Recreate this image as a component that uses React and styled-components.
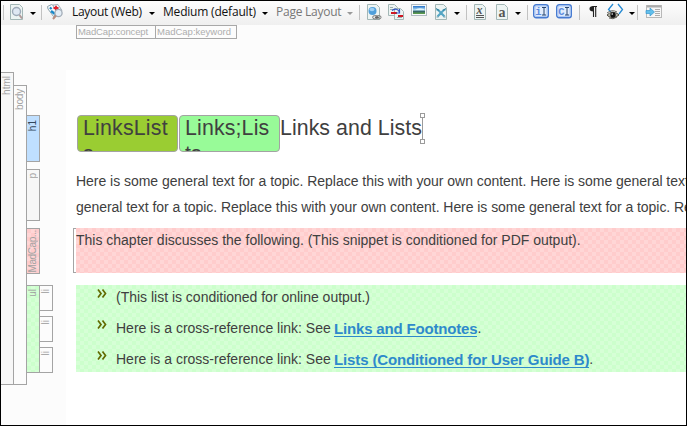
import React from "react";
import styled, { createGlobalStyle } from "styled-components";

const Global = createGlobalStyle`
  * { box-sizing: border-box; }
  body { margin: 0; overflow: hidden; }
`;

const checker = (a, b) =>
  `repeating-conic-gradient(${a} 0 25%, ${b} 0 50%) 0 0 / 8px 8px`;
const PINK = checker("#ffd6d6", "#ffcccc");
const GREEN = checker("#d6ffd6", "#ccffcc");

const Window = styled.div`
  width: 687px;
  height: 426px;
  border: 1px solid #000;
  background: #fcfcfc;
  display: flex;
  flex-direction: column;
  overflow: hidden;
  font-family: "Liberation Sans", Arial, sans-serif;
  color: #404040;
`;

const Toolbar = styled.div`
  height: 24px;
  flex: none;
  display: flex;
  align-items: flex-start;
  background: linear-gradient(#fdfdfd, #efefef);
`;

const Slot = styled.div`
  flex: none;
  width: ${(p) => p.$w}px;
  height: 24px;
  padding-top: 3px;
  svg { display: block; overflow: visible; }
`;

const Separator = styled.div`
  flex: none;
  width: 1px;
  height: 15px;
  margin: 4px ${(p) => p.$after}px 0 0;
  background: #c2c2c2;
`;

const MenuText = styled.div`
  flex: none;
  width: ${(p) => p.$w}px;
  font: 12px/22px "Open Sans", "Noto Sans", sans-serif;
  letter-spacing: ${(p) => p.$ls || 0}px;
  white-space: nowrap;
  color: ${(p) => (p.$dim ? "#777" : "#111")};
`;

const Caret = styled.div`
  flex: none;
  width: 0;
  height: 0;
  margin: 11px ${(p) => p.$after}px 0 0;
  border: 3px solid transparent;
  border-top-color: ${(p) => (p.$dim ? "#999" : "#000")};
  border-bottom: 0;
`;

const Workspace = styled.div`
  flex: 1;
  display: flex;
  min-height: 0;
`;

const Gutter = styled.div`
  flex: none;
  width: 65px;
  display: flex;
  align-items: flex-start;
`;

const Bar = styled.div`
  flex: none;
  width: ${(p) => p.$w || 14}px;
  height: ${(p) => p.$h}px;
  margin-top: ${(p) => p.$top || 0}px;
  margin-left: ${(p) => p.$left || 0}px;
  padding-top: ${(p) => p.$pad || 0}px;
  border: 1px solid #a4a4a4;
  border-left-width: ${(p) => (p.$open ? 0 : 1)}px;
  background: ${(p) => p.$bg || "#fcfcfc"};
  display: flex;
  justify-content: center;
  align-items: flex-start;
  overflow: hidden;
`;

const BarLabel = styled.span`
  writing-mode: vertical-rl;
  transform: rotate(180deg);
  font-size: ${(p) => p.$size || 10}px;
  line-height: 12px;
  letter-spacing: ${(p) => p.$ls || 0}px;
  white-space: nowrap;
  color: ${(p) => p.$color || "#a2a2a2"};
`;

const Stack = styled.div`
  display: flex;
  flex-direction: column;
  padding-top: ${(p) => p.$top || 0}px;
  margin-left: -1px;
`;

const ListBars = styled.div`
  display: flex;
  margin-top: 11px;
`;

const Main = styled.div`
  flex: 1;
  min-width: 0;
  display: flex;
  flex-direction: column;
`;

const MetaRow = styled.div`
  height: 45px;
  flex: none;
  display: flex;
  padding-left: 10px;
`;

const MetaTag = styled.div`
  width: ${(p) => p.$w}px;
  height: 14px;
  border: 1px solid #a8a8a8;
  margin-right: -1px;
  padding-left: 1px;
  font-size: 9.5px;
  line-height: 12px;
  letter-spacing: ${(p) => p.$ls}px;
  white-space: nowrap;
  color: #adadad;
`;

const Page = styled.div`
  flex: 1;
  background: #fff;
  padding: 45px 0 0 10px;
  overflow: hidden;
`;

const Heading = styled.h1`
  margin: 0;
  height: 37px;
  display: flex;
  padding-left: 1px;
  font-size: 21.33px;
  font-weight: 400;
  line-height: 26px;
`;

const Marker = styled.span`
  width: 101px;
  height: 37px;
  margin-right: 1px;
  padding-left: 5px;
  border: 1px solid #a3a3a3;
  border-radius: 4px;
  background: ${(p) => p.$bg};
  overflow: hidden;
  letter-spacing: ${(p) => p.$ls || 0}px;
`;

const MarkerText = styled.span`
  display: block;
  margin-top: -1px;
`;

const Title = styled.span`
  letter-spacing: 0.06px;
  white-space: nowrap;
  width: 139px;
  margin-left: -1px;
`;

const InsertPoint = styled.svg`
  display: block;
  margin-top: -3px;
`;

const Paragraph = styled.p`
  margin: 16px 0 0;
  height: 52px;
  font-size: 14px;
  line-height: 26px;
  white-space: nowrap;
`;

const Line = styled.span`
  display: block;
  letter-spacing: ${(p) => p.$ls || 0}px;
`;

const Snippet = styled.div`
  height: 45px;
  margin: 8px 0 0 -3px;
  border-left: 1px solid #a4a4a4;
  display: flex;
`;

const BracketEnds = styled.div`
  width: 2px;
  border: solid #a4a4a4;
  border-width: 1px 0;
`;

const SnippetText = styled.div`
  flex: 1;
  background: ${PINK};
  font-size: 14px;
  line-height: 25px;
  letter-spacing: ${(p) => p.$ls || 0}px;
  white-space: nowrap;
`;

const List = styled.ul`
  margin: 12px 0 0;
  padding: 0;
  height: 87px;
  background: ${GREEN};
  list-style: none;
  overflow: hidden;
`;

const Item = styled.li`
  display: flex;
  height: 31px;
  padding-left: 21px;
  font-size: 14px;
  line-height: 25px;
  white-space: nowrap;
`;

const Bullet = styled.svg`
  flex: none;
  width: 10px;
  height: 9px;
  margin: 4px 9px 0 0;
`;

const ItemText = styled.span`
  width: ${(p) => (p.$w ? p.$w + "px" : "auto")};
  letter-spacing: ${(p) => p.$ls || 0}px;
`;

const Link = styled.a`
  height: 21px;
  font-size: 15px;
  font-weight: 700;
  line-height: 26px;
  color: #2e8acb;
  border-bottom: 1px solid #2e8acb;
  letter-spacing: ${(p) => p.$ls || 0}px;
`;

const Sheet = ({ w = 12 }) => (
  <path d={`M.5 .5h${w - 4}l3 3v12H.5z`} fill="#edf4f3" stroke="#a3b7b6" />
);
const Icon = ({ w = 16, children }) => (
  <svg width={w} height="16" viewBox={`0 0 ${w} 16`} fill="none">{children}</svg>
);

const PreviewIcon = () => (
  <Icon>
    <Sheet w={13} />
    <circle cx="6.5" cy="7.5" r="4" fill="#dfe8f3" stroke="#9daab8" strokeWidth="1.4" />
    <path d="M9.5 11l2.5 3.5" stroke="#b19a9a" strokeWidth="2" />
  </Icon>
);
const TagsIcon = () => (
  <Icon>
    <path d="M.5 2.5l4-2 2 1 4 7-4 4L1 5z" fill="#f5f8fa" stroke="#8fa4ae" />
    <path d="M6 1l5-.5 4 6-5 3z" fill="#eef3f6" stroke="#a2b0ba" />
    <path d="M3 5l1.5-1.5M4 7l4 3" stroke="#1687c9" strokeWidth="2.4" />
    <path d="M6.5 4h5M9 1.8v4.6" stroke="#e21f2b" strokeWidth="1.8" />
    <circle cx="11.5" cy="9" r="3.6" fill="#e3edf6" stroke="#a3adb8" strokeWidth="1.3" />
    <path d="M9 11.5l-3 3.5" stroke="#b78d80" strokeWidth="2" />
  </Icon>
);
const LinkIcon = () => (
  <Icon>
    <Sheet w={13} />
    <circle cx="5.5" cy="7" r="4" fill="#4f9fdb" />
    <ellipse cx="5" cy="5.5" rx="2.5" ry="1.8" fill="#9fd0f3" />
    <rect x="5.7" y="11.7" width="5" height="3.2" rx="1.6" fill="#e6e6e6" stroke="#777" />
    <rect x="9" y="11.7" width="5" height="3.2" rx="1.6" stroke="#777" />
    <path d="M8 13.3h4" stroke="#555" />
  </Icon>
);
const XrefIcon = () => (
  <Icon>
    <path d="M.5 .5h6l3 3v8h-9z" fill="#edf4f3" stroke="#a3b7b6" />
    <path d="M6.5 4.5h6l3 3v8h-9z" fill="#edf4f3" stroke="#a3b7b6" />
    <path d="M2 3.5h3M2 5.5h4M9 13.5h5" stroke="#9bafaf" />
    <path d="M3 9h6M10 12h5" stroke="#cf1722" strokeWidth="2" />
    <path d="M4 6.5q5-3 7 1M11.5 5v4H8" stroke="#3155c5" strokeWidth="1.2" />
  </Icon>
);
const ImageIcon = () => (
  <Icon>
    <defs>
      <linearGradient id="sky" x2="0" y2="1">
        <stop stopColor="#2672ca" /><stop offset=".5" stopColor="#bce4f6" />
        <stop offset=".65" stopColor="#33606b" /><stop offset="1" stopColor="#62a747" />
      </linearGradient>
    </defs>
    <rect x=".5" y=".5" width="15" height="11" fill="#f7f9fa" stroke="#b0bac1" />
    <rect x="2" y="2" width="12" height="8" fill="url(#sky)" />
    <path d="M4 6q3-3 9-1v1H4z" fill="#e2f5fb" />
  </Icon>
);
const CutSheetIcon = () => (
  <Icon>
    <Sheet />
    <path d="M1.5 5.5q2 0 4 3l4 4M10.5 5.5q-2 0-4 3l-4 4" stroke="#55a6c4" strokeWidth="2.2" />
    <path d="M1 4.5l3 2M11 4.5l-3 2" stroke="#357f9a" />
    <path d="M1.5 13h2M8.5 13h2" stroke="#739ba9" />
  </Icon>
);
const GlyphText = styled.text`
  font-family: "Liberation Serif", serif;
  font-weight: 700;
  font-style: ${(p) => (p.$italic ? "italic" : "normal")};
  font-size: ${(p) => p.$size}px;
  fill: ${(p) => p.$fill || "#555"};
`;
const CodeLetter = styled.text`
  font: 700 10.5px "Liberation Mono", monospace;
  fill: #5c8bdc;
`;
const VariableIcon = () => (
  <Icon>
    <Sheet />
    <GlyphText $italic $size={12} x="2.5" y="9.5">x</GlyphText>
    <path d="M2 11.5h8M2 13.5h8" stroke="#555" />
  </Icon>
);
const StyleIcon = () => (
  <Icon>
    <Sheet />
    <GlyphText $size={14} x="2.5" y="13">a</GlyphText>
  </Icon>
);
const CursorIcon = ({ letter }) => (
  <Icon>
    <rect x=".7" y=".7" width="14.6" height="13" rx="2.5" fill="#e3edfc" stroke="#477bd1" strokeWidth="1.4" />
    <rect x="2" y="2" width="12" height="10.4" rx="1" stroke="#a8c6f2" />
    <CodeLetter x="2.2" y="10.8">{letter}</CodeLetter>
    <path d="M9 3.5h4M11 3.5v7.5M9 11h4" stroke="#26456f" />
  </Icon>
);
const PilcrowIcon = () => (
  <Icon w={9}>
    <path d="M8 2.5H3.5M4.5 2v11M6.7 2v11" stroke="#222" strokeWidth="1.1" />
    <path d="M4.5 2Q.5 2 .5 4.8T4.5 7.5z" fill="#222" />
  </Icon>
);
const EyeIcon = () => (
  <Icon>
    <path d="M6 0L1.5 5.5L4 8M11 0l4.5 5.5L12 10" stroke="#258ad3" strokeWidth="1.3" />
    <path d="M0 11q5-5 11-1l1 1q-6 5-11 1z" fill="#b4b4a7" stroke="#514f45" />
    <circle cx="6" cy="11" r="2.7" fill="#111" />
    <circle cx="5.2" cy="10" r=".8" fill="#fff" />
    <path d="M0 9q5-4 10-1M2 14q4 2 8-1" stroke="#65645c" />
  </Icon>
);
const PanelIcon = () => (
  <Icon>
    <rect x=".5" y="1.5" width="15" height="12" fill="#f6f6f6" stroke="#b8b8b8" />
    <path d="M1 2.5h14" stroke="#aaa" strokeWidth="2" />
    <path d="M9 5.5h5M9 7.5h5M9 9.5h5M9 11.5h5" stroke="#999" strokeWidth=".8" />
    <path d="M0 6.5h4V4l4.5 4L4 12V9.5H0z" fill="#62bfeb" stroke="#3697ce" strokeWidth=".7" />
  </Icon>
);

const Chevrons = () => (
  <Bullet viewBox="0 0 10 9" fill="none">
    <path d="M1 .5L4 4.5L1 8.5M5.5 .5L8.5 4.5L5.5 8.5" stroke="#626a00" strokeWidth="1.7" />
  </Bullet>
);

const TopToolbar = () => (
  <Toolbar>
    <Slot $w={2} />
    <Separator $after={6} />
    <Slot $w={20}><PreviewIcon /></Slot>
    <Caret $after={5} />
    <Separator $after={5} />
    <Slot $w={25}><TagsIcon /></Slot>
    <MenuText $w={77} $ls={-0.28}>Layout (Web)</MenuText>
    <Caret $after={8} />
    <MenuText $w={99} $ls={-0.2}>Medium (default)</MenuText>
    <Caret $after={8} />
    <MenuText $w={71} $ls={-0.25} $dim>Page Layout</MenuText>
    <Caret $dim $after={6} />
    <Separator $after={7} />
    <Slot $w={21}><LinkIcon /></Slot>
    <Slot $w={23}><XrefIcon /></Slot>
    <Slot $w={24}><ImageIcon /></Slot>
    <Slot $w={19}><CutSheetIcon /></Slot>
    <Caret $after={6} />
    <Separator $after={7} />
    <Slot $w={22}><VariableIcon /></Slot>
    <Slot $w={19}><StyleIcon /></Slot>
    <Caret $after={6} />
    <Separator $after={5} />
    <Slot $w={23}><CursorIcon letter="i" /></Slot>
    <Slot $w={23}><CursorIcon letter="C" /></Slot>
    <Separator $after={9} />
    <Slot $w={18}><PilcrowIcon /></Slot>
    <Slot $w={22}><EyeIcon /></Slot>
    <Caret $after={2} />
    <Separator $after={8} />
    <Slot $w={16}><PanelIcon /></Slot>
  </Toolbar>
);

const StructureBars = () => (
  <Gutter>
    <Bar $open $w={13} $h={313} $top={47} $pad={3} $bg="#f7f7f7"><BarLabel $size={10}>html</BarLabel></Bar>
    <Bar $h={300} $top={60} $left={-1} $pad={3}><BarLabel $size={10} $ls={-0.2}>body</BarLabel></Bar>
    <Stack $top={90}>
      <Bar $h={47} $pad={4} $bg="#bfdfff"><BarLabel $size={10} $color="#34485c">h1</BarLabel></Bar>
      <Bar $h={52} $top={7} $pad={3} $bg="#f7f7f7"><BarLabel>p</BarLabel></Bar>
      <Bar $h={46} $top={7} $pad={1} $bg={PINK}><BarLabel $size={10} $ls={-0.4}>MadCap...</BarLabel></Bar>
      <ListBars>
        <Bar $h={88} $pad={3} $bg={GREEN}><BarLabel>ul</BarLabel></Bar>
        <Stack>
          <Bar $h={26} $pad={3}><BarLabel>li</BarLabel></Bar>
          <Bar $h={26} $top={5} $pad={3}><BarLabel>li</BarLabel></Bar>
          <Bar $h={26} $top={5} $pad={3}><BarLabel>li</BarLabel></Bar>
        </Stack>
      </ListBars>
    </Stack>
  </Gutter>
);

export default function App() {
  return (
    <Window>
      <Global />
      <TopToolbar />
      <Workspace>
        <StructureBars />
        <Main>
          <MetaRow>
            <MetaTag $w={80} $ls={-0.13}>MadCap:concept</MetaTag>
            <MetaTag $w={82} $ls={0}>MadCap:keyword</MetaTag>
          </MetaRow>
          <Page>
            <Heading>
              <Marker $bg="#9acd32" $ls={0.2}><MarkerText>LinksList s</MarkerText></Marker>
              <Marker $bg="#98fb98" $ls={0.15}><MarkerText>Links;Lis ts</MarkerText></Marker>
              <Title>Links and Lists</Title>
              <InsertPoint width="7" height="32" fill="#fff" stroke="#9b9b9b">
                <path d="M3.5 5v22" />
                <rect x="1.5" y="1.5" width="4" height="4" />
                <rect x="1.5" y="27.5" width="4" height="4" />
              </InsertPoint>
            </Heading>
            <Paragraph>
              <Line $ls={-0.035}>Here is some general text for a topic. Replace this with your own content. Here is some general text</Line>
              <Line $ls={-0.05}>general text for a topic. Replace this with your own content. Here is some general text for a topic. Replace</Line>
            </Paragraph>
            <Snippet>
              <BracketEnds />
              <SnippetText $ls={-0.005}>This chapter discusses the following. (This snippet is conditioned for PDF output).</SnippetText>
            </Snippet>
            <List>
              <Item><Chevrons /><ItemText $ls={-0.01}>(This list is conditioned for online output.)</ItemText></Item>
              <Item><Chevrons /><ItemText $w={218}>Here is a cross-reference link: See</ItemText><Link $ls={-0.17}>Links and Footnotes</Link>.</Item>
              <Item><Chevrons /><ItemText $w={218}>Here is a cross-reference link: See</ItemText><Link $ls={-0.13}>Lists (Conditioned for User Guide B)</Link>.</Item>
            </List>
          </Page>
        </Main>
      </Workspace>
    </Window>
  );
}
